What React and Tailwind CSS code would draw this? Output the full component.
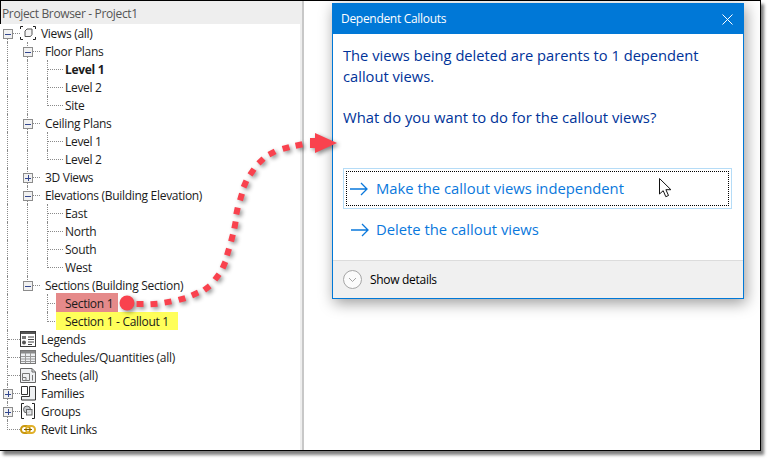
const font = "font-['Open_Sans','Noto_Sans',sans-serif]";

// squares of the dotted callout line, centre points read off the picture
const dots = [
  [140, 304], [154, 304], [168, 302], [182, 299], [195, 294], [207, 288], [217, 277],
  [224, 265], [228, 252], [232, 238], [235, 225], [237, 211], [241, 197], [245, 184],
  [252, 172], [261, 161], [272, 153], [286, 148], [299, 145],
];

function Callout() {
  return (
    <svg
      className="absolute left-0 top-0 z-20 drop-shadow-[2px_2px_2px_rgba(0,0,0,0.45)]"
      width="773"
      height="463"
      fill="#f9424e"
    >
      <circle cx="127" cy="303" r="7.5" />
      {dots.map(([x, y], i) => {
        const prev = dots[Math.max(i - 1, 0)];
        const next = dots[Math.min(i + 1, dots.length - 1)];
        const angle = (Math.atan2(next[1] - prev[1], next[0] - prev[0]) * 180) / Math.PI;
        return (
          <rect
            key={x}
            x={x - 3.5}
            y={y - 3}
            width="7"
            height="6"
            transform={`rotate(${angle} ${x} ${y})`}
          />
        );
      })}
      <path d="M310 138h5v-5l22 10-22 10v-5h-5z" />
    </svg>
  );
}

function Cell({ kind, wide }) {
  const width = wide ? "w-[16px]" : "w-[13px]";
  if (kind === "line") {
    return <div className="ml-[7px] h-full w-[13px] shrink-0 border-l border-dotted border-[#8a8a8a]" />;
  }
  if (kind === "tee") {
    return (
      <div className={`ml-[7px] h-full ${width} shrink-0 border-l border-dotted border-[#8a8a8a]`}>
        <div className="h-[10px] border-b border-dotted border-[#8a8a8a]" />
      </div>
    );
  }
  if (kind === "elbow") {
    return (
      <div className={`ml-[7px] h-full ${width} shrink-0`}>
        <div className="h-[10px] border-b border-l border-dotted border-[#8a8a8a]" />
      </div>
    );
  }
  if (kind === "first") {
    return (
      <div className="ml-[7px] h-full w-[13px] shrink-0">
        <div className="h-[10px] border-b border-dotted border-[#8a8a8a]" />
        <div className="h-[8px] border-l border-dotted border-[#8a8a8a]" />
      </div>
    );
  }
  return <div className="h-full w-5 shrink-0" />;
}

function Expander({ x, open }) {
  return (
    <span
      className={`absolute top-[5px] flex h-[10px] w-[10px] items-center justify-center border border-[#8c8c8c] bg-[#f1f1f1] ${
        x === 0 ? "left-[3px]" : "left-[23px]"
      }`}
    >
      <span className="relative block h-[6px] w-[6px]">
        <span className="absolute left-0 top-[3px] h-px w-[6px] bg-[#33478f]" />
        {!open && <span className="absolute left-[3px] top-0 h-[6px] w-px bg-[#33478f]" />}
      </span>
    </span>
  );
}

const stroke = { fill: "none", stroke: "#3c3c3c" };

const icons = {
  views: (
    <svg width="16" height="14" viewBox="0 0 16 14" fill="none" stroke="#222">
      <path d="M.5 3V.5H3M13 .5h2.500V3M15.500 11v2.500H13M3 13.500H.5V11" />
      <path d="M5 5 7 3h5v5.500L10.500 10.500H5z" stroke="#555" fill="#f4f4f4" />
    </svg>
  ),
  legends: (
    <svg width="16" height="16" viewBox="0 0 16 16">
      <rect x=".5" y=".5" width="15" height="15" fill="#e9edf0" {...stroke} />
      <path d="M1 1h14v2H1z" fill="#555" />
      <circle cx="4" cy="11.500" r="2" fill="#555" />
      <path d="M2 5h4v3H2z" fill="#777" />
      <path d="M8 6h6M8 8.500h6M8 11h6M8 13.500h4" stroke="#444" />
    </svg>
  ),
  schedules: (
    <svg width="16" height="14" viewBox="0 0 16 14">
      <rect x=".5" y=".5" width="15" height="13" fill="#eef0f2" stroke="#777" />
      <path d="M1 1h14v2.500H1z" fill="#8a8a8a" />
      <path d="M1 6.500h14M1 9h14M1 11.500h14M5.500 3v10M10.500 3v10" stroke="#999" />
    </svg>
  ),
  sheets: (
    <svg width="16" height="15" viewBox="0 0 16 15">
      <path d="M.5.5H12l3.500 3.500v10.500H.5z" fill="#eef0f2" stroke="#666" />
      <path d="M12 .5V4h3.500" fill="none" stroke="#666" />
      <path d="M2.500 5.500h7v7H6v-3H2.500zM2.500 9.500v3H6M12.500 7v5.500" fill="none" stroke="#777" />
    </svg>
  ),
  families: (
    <svg width="15" height="15" viewBox="0 0 15 15" fill="#eef0f2" stroke="#333">
      <path d="M.5.5h6v8h-6z" fill="#fff" />
      <path d="M8.500.5h6v13.500H.5v-3.500h8z" />
    </svg>
  ),
  groups: (
    <svg width="14" height="16" viewBox="0 0 14 16" fill="none">
      <path d="M3 .5H.5v15H3M11 .5h2.500v15H11" stroke="#222" />
      <circle cx="6" cy="6.500" r="3.500" fill="#c8ccd0" stroke="#666" />
      <rect x="5.500" y="6.500" width="5.500" height="5.500" fill="#e3e6e8" fillOpacity=".8" stroke="#666" />
    </svg>
  ),
  links: (
    <svg width="16" height="9" viewBox="0 0 16 9" fill="none" strokeWidth="2">
      <rect x="1" y="1" width="9" height="7" rx="3.500" stroke="#c9980f" />
      <rect x="6" y="1" width="9" height="7" rx="3.500" stroke="#e0b02a" />
      <path d="M4 4.500h8" stroke="#7a5c08" strokeWidth="1" />
    </svg>
  ),
};

// one row of the browser tree: cells are the dotted guide columns
function Row({ cells, expander, open, icon, label, bold, mark }) {
  const deep = cells.length === 3;
  const name = (
    <span className={`block whitespace-nowrap pt-[2px] ${bold ? "font-bold" : ""}`}>{label}</span>
  );
  return (
    <div className="relative flex h-[18px] items-center text-[12px] leading-[18px] tracking-[-0.3px] text-[#1b1b1b]">
      {cells.map((kind, i) => (
        <Cell key={i} kind={kind} wide={i === cells.length - 1 && deep} />
      ))}
      {expander !== undefined && <Expander x={expander} open={open} />}
      {icon && <span className="flex w-[16px] shrink-0 justify-center">{icons[icon]}</span>}
      {mark === "red" && (
        <span className="z-10 -ml-[7px] -mt-px flex h-[19px] items-center bg-[#e58a8a] pl-[9px] pr-[5px]">{name}</span>
      )}
      {mark === "yellow" && (
        <span className="z-10 -ml-[7px] flex h-[18px] items-center bg-[#ffff5a] pl-[9px] pr-[9px]">{name}</span>
      )}
      {!mark && <span className={deep ? "ml-[2px]" : "ml-[5px]"}>{name}</span>}
    </div>
  );
}

function Tree() {
  const plan = (label, last, down, extra) => (
    <Row cells={["line", down ? "line" : "none", last ? "elbow" : "tee"]} label={label} {...extra} />
  );
  const group = (label, last, open) => (
    <Row cells={["line", last ? "elbow" : "tee"]} expander={1} open={open} label={label} />
  );
  return (
    <div>
      <Row cells={["first"]} expander={0} open icon="views" label="Views (all)" />
      {group("Floor Plans", false, true)}
      {plan("Level 1", false, true, { bold: true })}
      {plan("Level 2", false, true)}
      {plan("Site", true, true)}
      {group("Ceiling Plans", false, true)}
      {plan("Level 1", false, true)}
      {plan("Level 2", true, true)}
      {group("3D Views", false, false)}
      {group("Elevations (Building Elevation)", false, true)}
      {plan("East", false, true)}
      {plan("North", false, true)}
      {plan("South", false, true)}
      {plan("West", true, true)}
      {group("Sections (Building Section)", true, true)}
      {plan("Section 1", false, false, { mark: "red" })}
      {plan("Section 1 - Callout 1", true, false, { mark: "yellow" })}
      <Row cells={["tee"]} icon="legends" label="Legends" />
      <Row cells={["tee"]} icon="schedules" label="Schedules/Quantities (all)" />
      <Row cells={["tee"]} icon="sheets" label="Sheets (all)" />
      <Row cells={["tee"]} expander={0} icon="families" label="Families" />
      <Row cells={["tee"]} expander={0} icon="groups" label="Groups" />
      <Row cells={["elbow"]} icon="links" label="Revit Links" />
    </div>
  );
}

function CommandArrow() {
  return (
    <svg width="18" height="14" viewBox="0 0 18 14" fill="none" stroke="#0a78dc" strokeWidth="1.300">
      <path d="M0 7h17M11 1l6 6-6 6" />
    </svg>
  );
}

function Dialog() {
  return (
    <div className="absolute left-[332px] top-[3px] z-10 flex h-[296px] w-[412px] flex-col border border-[#0078d7] bg-white shadow-[2px_4px_14px_rgba(0,0,0,0.4)]">
      <div className="flex h-[30px] shrink-0 items-center justify-between bg-[#0078d7] pl-[8px] pr-[10px] text-[12px] tracking-[-0.3px] text-white">
        <span>Dependent Callouts</span>
        <svg width="11" height="11" viewBox="0 0 11 11" stroke="#fff" strokeWidth="1">
          <path d="M.5.5l10 10M10.500.5l-10 10" />
        </svg>
      </div>
      <div className="flex-1 pl-[10px] pr-[11px] pt-[11px]">
        <p className="text-[14.7px] leading-[21px] text-[#003399]">
          The views being deleted are parents to 1 dependent
          <br />
          callout views.
        </p>
        <p className="mt-[20px] text-[14.8px] leading-[21px] text-[#003399]">
          What do you want to do for the callout views?
        </p>
        <div className="mt-[40px] h-[41px] border border-[#b5dcf7] p-[2px]">
          <div className="flex h-full items-center border border-dotted border-black pl-[3px] text-[#0a78dc]">
            <CommandArrow />
            <span className="ml-[8px] whitespace-nowrap text-[14.8px]">Make the callout views independent</span>
          </div>
        </div>
        <div className="flex h-[41px] items-center pl-[8px] text-[#0a78dc]">
          <CommandArrow />
          <span className="ml-[7px] whitespace-nowrap text-[14.8px]">Delete the callout views</span>
        </div>
      </div>
      <div className="flex h-[38px] shrink-0 items-center gap-[8px] border-t border-[#dcdcdc] bg-[#f0f0f0] pl-[10px] text-[12px] tracking-[-0.3px] text-black">
        <svg width="19" height="19" viewBox="0 0 19 19" fill="none" stroke="#a5a5a5">
          <circle cx="9.500" cy="9.500" r="9" fill="#fbfbfb" />
          <path d="M6 8l3.500 3.500L13 8" />
        </svg>
        <span>Show details</span>
      </div>
    </div>
  );
}

function Cursor() {
  return (
    <svg className="absolute left-[659px] top-[178px] z-20" width="13" height="20" viewBox="0 0 13 20">
      <path d="M.5.5v15.500l3.700-3.300 2.600 6 2.700-1.200-2.600-5.800h5z" fill="#fff" stroke="#111" />
    </svg>
  );
}

export default function App() {
  return (
    <div className={`relative h-[463px] w-[773px] overflow-hidden bg-white ${font}`}>
      <div className="h-[451px] w-[761px] border border-black bg-white shadow-[3px_4px_3px_rgba(0,0,0,0.5)]">
        <div className="flex h-full">
          <div className="flex w-[303px] shrink-0 flex-col border-r-2 border-[#c8c8c8] bg-[#eeeeee] pr-[2px] pt-[3px]">
            <div className="flex h-[20px] shrink-0 items-center pl-[1px] text-[12px] tracking-[-0.35px] text-[#555]">
              Project Browser - Project1
            </div>
            <div className="-ml-px flex-1 bg-white">
              <Tree />
            </div>
          </div>
          <div className="flex-1 bg-white" />
        </div>
      </div>
      <Dialog />
      <Cursor />
      <Callout />
    </div>
  );
}
